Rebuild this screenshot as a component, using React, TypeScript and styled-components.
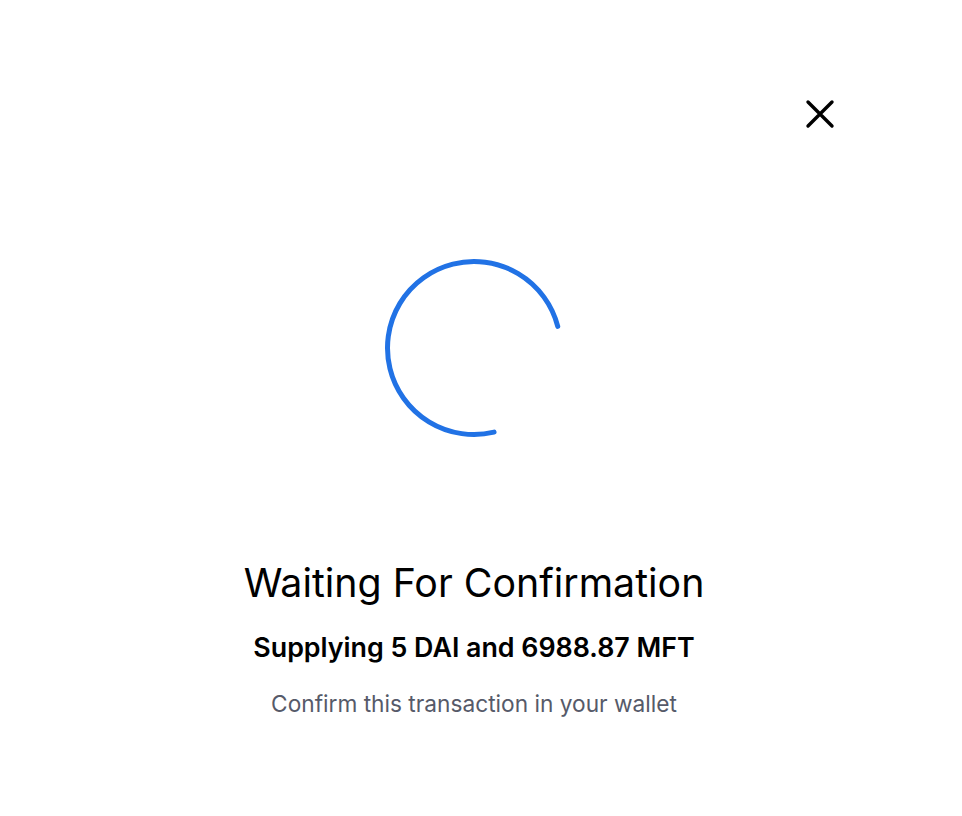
import React from "react";
import styled, { createGlobalStyle } from "styled-components";

const Global = createGlobalStyle`
  html, body { margin: 0; padding: 0; background: #ffffff; }
  body { font-family: Inter, "Noto Sans", sans-serif; color: #000; }
`;

const Page = styled.div`
  padding: 40px 0 0 55px;
`;

const Card = styled.div`
  width: 838px;
  box-sizing: border-box;
  border-radius: 32px;
  background: #fff;
  padding: 59px 60px 60px 60px;
  display: flex;
  flex-direction: column;
`;

const Header = styled.div`
  display: flex;
  justify-content: flex-end;
  height: 30px;
  margin-right: -2px;
`;

const CloseButton = styled.button`
  width: 30px;
  height: 30px;
  padding: 0;
  border: none;
  background: none;
  display: flex;
  align-items: center;
  justify-content: center;
  cursor: pointer;
`;

const SpinnerArea = styled.div`
  display: flex;
  justify-content: center;
  margin-top: 129px;
`;

const TextBlock = styled.div`
  display: flex;
  flex-direction: column;
  align-items: center;
  margin-top: 122px;
`;

const Title = styled.div`
  font-size: 39.3px;
  font-weight: 400;
  line-height: 45px;
`;

const Subtitle = styled.div`
  font-size: 26.8px;
  font-weight: 600;
  line-height: 33px;
  margin-top: 26px;
`;

const Caption = styled.div`
  font-size: 22.7px;
  font-weight: 400;
  line-height: 27px;
  color: #565a69;
  margin-top: 26px;
`;

const cx = 90;
const cy = 90;
const r = 86.5;
const a1 = (-14.5 * Math.PI) / 180;
const a2 = (76.6 * Math.PI) / 180;
const p1 = [cx + r * Math.cos(a1), cy + r * Math.sin(a1)];
const p2 = [cx + r * Math.cos(a2), cy + r * Math.sin(a2)];

export default function App() {
  return (
    <>
      <Global />
      <Page>
        <Card>
          <Header>
            <CloseButton aria-label="Close">
              <svg width="30" height="30" viewBox="0 0 30 30">
                <path d="M3 3 L27 27 M27 3 L3 27" stroke="#000" strokeWidth="3.4" strokeLinecap="round" />
              </svg>
            </CloseButton>
          </Header>
          <SpinnerArea>
            <svg width="180" height="180" viewBox="0 0 180 180">
              <path
                d={`M ${p1[0]} ${p1[1]} A ${r} ${r} 0 1 0 ${p2[0]} ${p2[1]}`}
                fill="none"
                stroke="#2172e5"
                strokeWidth="5"
                strokeLinecap="round"
              />
            </svg>
          </SpinnerArea>
          <TextBlock>
            <Title>Waiting For Confirmation</Title>
            <Subtitle>Supplying 5 DAI and 6988.87 MFT</Subtitle>
            <Caption>Confirm this transaction in your wallet</Caption>
          </TextBlock>
        </Card>
      </Page>
    </>
  );
}
